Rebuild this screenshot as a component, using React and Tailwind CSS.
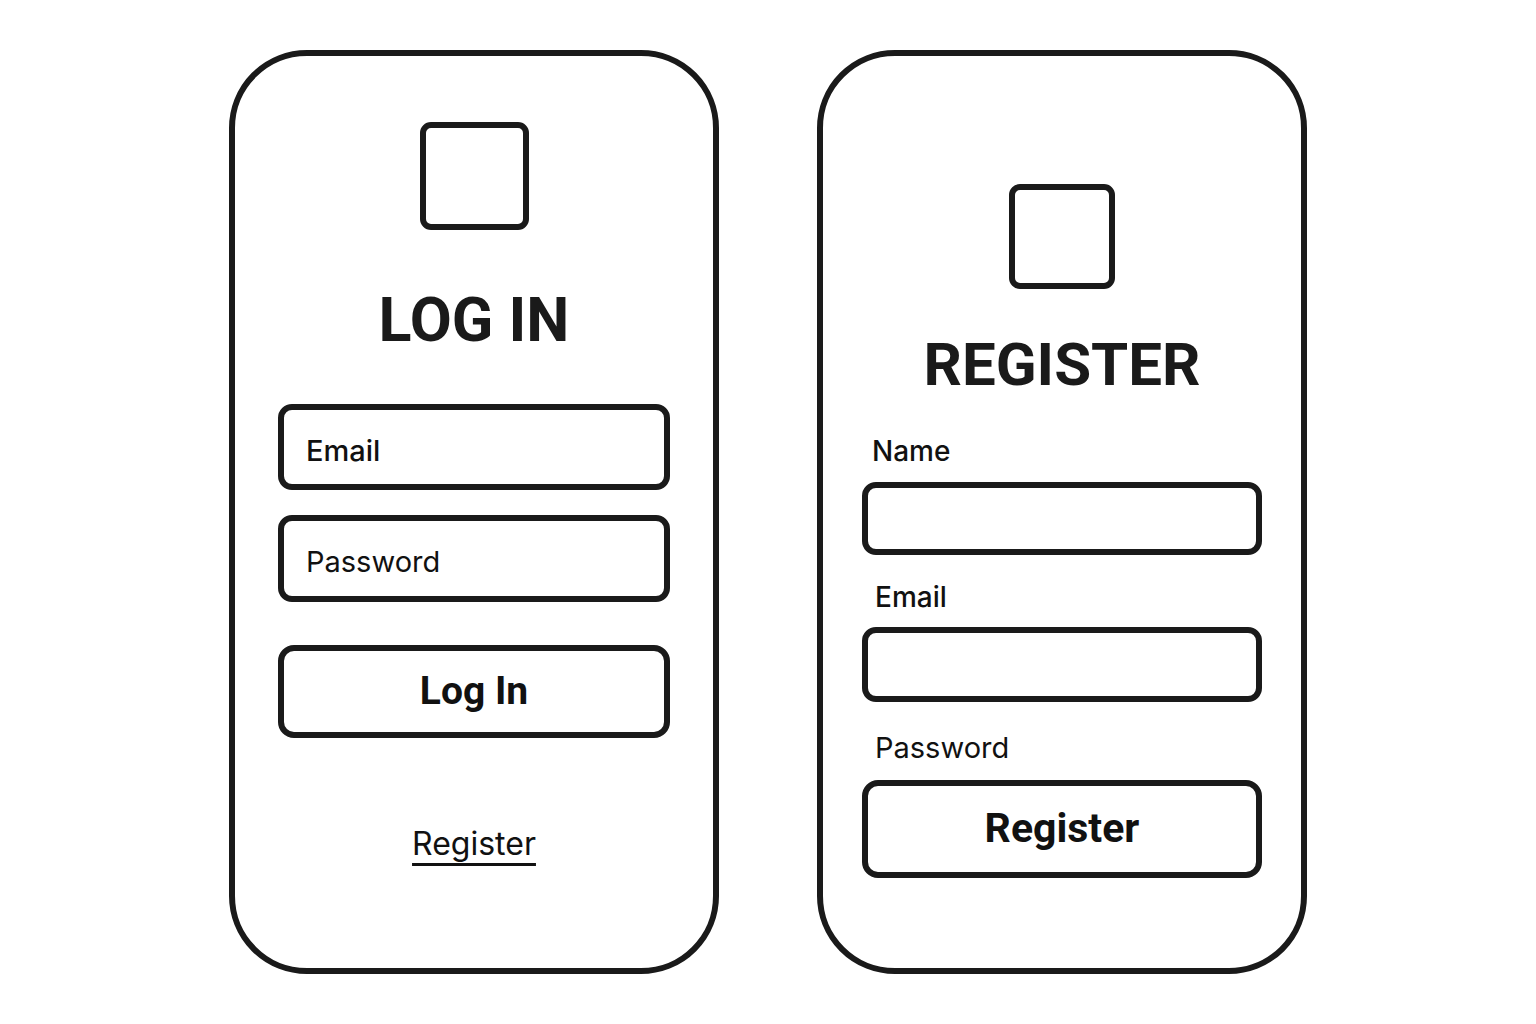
import React from "react";

const title = { fontFamily: "Roboto, 'Liberation Sans', sans-serif" };
const body = { fontFamily: "Inter, 'Liberation Sans', sans-serif" };

function LogoBox({ size }) {
  return <div className={`${size} rounded-[11px] border-[6px] border-[#1a1a1a]`} />;
}

function LoginCard() {
  return (
    <div className="w-[490px] h-[924px] rounded-[78px] border-[6px] border-[#1a1a1a] bg-white flex flex-col items-center px-[43px] pt-[66px]">
      <LogoBox size="w-[109px] h-[108px]" />
      <h1 className="mt-[60px] text-[61px] leading-none font-bold text-[#1a1a1a]" style={title}>LOG IN</h1>
      <div className="mt-[53px] w-full h-[86px] rounded-[14px] border-[6px] border-[#1a1a1a] flex items-center pl-[22px] pt-[7px] text-[29px] font-medium text-[#111]">
        Email
      </div>
      <div className="mt-[25px] w-full h-[87px] rounded-[14px] border-[6px] border-[#1a1a1a] flex items-center pl-[22px] pt-[7px] text-[29px] text-[#111]">
        Password
      </div>
      <button className="mt-[43px] w-full h-[93px] rounded-[16px] border-[6px] border-[#1a1a1a] flex items-center justify-center text-[39px] font-bold text-[#111]" style={title}>
        Log In
      </button>
      <a className="mt-[90px] text-[32px] leading-none text-[#111] underline decoration-[3px] underline-offset-[8px]">
        Register
      </a>
    </div>
  );
}

function RegisterCard() {
  return (
    <div className="w-[490px] h-[924px] rounded-[78px] border-[6px] border-[#1a1a1a] bg-white flex flex-col items-center px-[39px] pt-[128px]">
      <LogoBox size="w-[106px] h-[105px]" />
      <h1 className="mt-[46px] text-[60px] leading-none font-bold text-[#1a1a1a]" style={title}>REGISTER</h1>
      <label className="mt-[42px] self-start pl-[10px] text-[28px] leading-none font-medium text-[#111]">Name</label>
      <div className="mt-[17px] w-full h-[73px] rounded-[14px] border-[6px] border-[#1a1a1a]" />
      <label className="mt-[28px] self-start pl-[13px] text-[28px] leading-none font-medium text-[#111]">Email</label>
      <div className="mt-[16px] w-full h-[75px] rounded-[14px] border-[6px] border-[#1a1a1a]" />
      <label className="mt-[31px] self-start pl-[13px] text-[29px] leading-none text-[#111]">Password</label>
      <button className="mt-[18px] w-full h-[98px] rounded-[16px] border-[6px] border-[#1a1a1a] flex items-center justify-center text-[41px] font-bold text-[#111]" style={title}>
        Register
      </button>
    </div>
  );
}

export default function App() {
  return (
    <div className="w-full h-screen bg-white flex items-center justify-center gap-[98px]" style={body}>
      <LoginCard />
      <RegisterCard />
    </div>
  );
}
